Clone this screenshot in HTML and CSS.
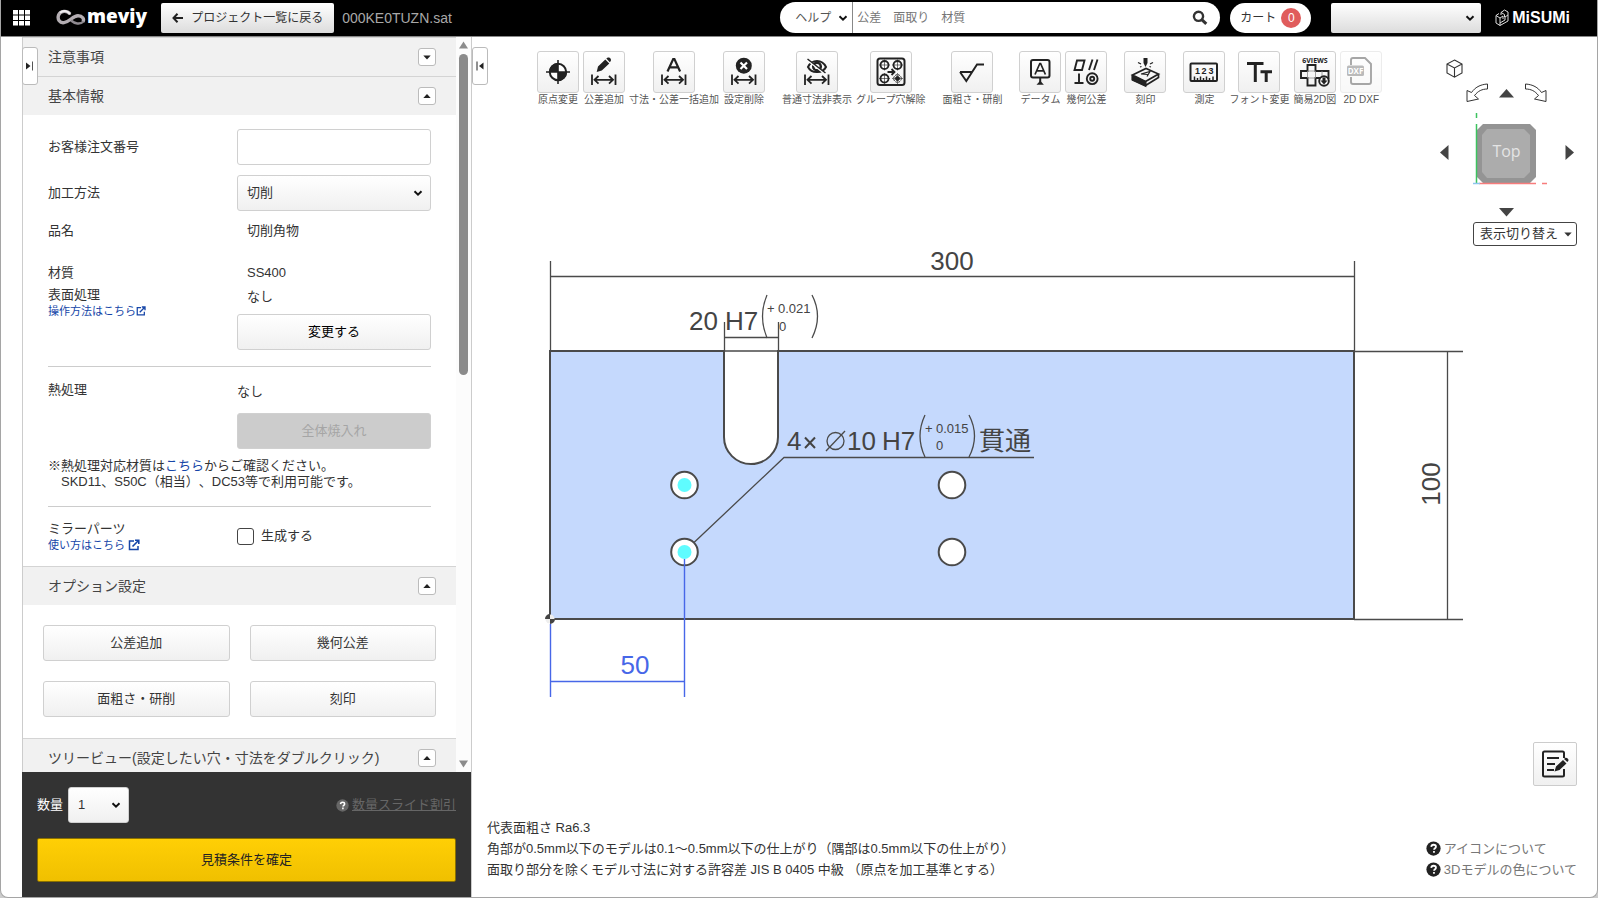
FILE: index.html
```html
<!DOCTYPE html>
<html lang="ja">
<head>
<meta charset="utf-8">
<title>meviy 000KE0TUZN.sat</title>
<link rel="stylesheet" href="styles.css">
</head>
<body>
<svg class="defs" aria-hidden="true">
  <defs>
    <symbol id="chev" viewBox="0 0 10 10"><path d="M1.5 3.2 5 6.6 8.5 3.2" fill="none" stroke="currentColor" stroke-width="2"/></symbol>
    <symbol id="tri-up" viewBox="0 0 8 8"><path d="M.3 6 4 2l3.700 4z" fill="currentColor"/></symbol>
    <symbol id="tri-down" viewBox="0 0 8 8"><path d="M.3 2.500h7.400L4 6.500z" fill="currentColor"/></symbol>
    <symbol id="ext" viewBox="0 0 12 12"><path d="M6 2H1.500v8.500H10V7" fill="none" stroke="currentColor" stroke-width="1.500"/><path d="M4.500 7.500 10.500 1.500M7 1.200h3.800V5" fill="none" stroke="currentColor" stroke-width="1.600"/></symbol>
    <symbol id="q" viewBox="0 0 16 16"><circle cx="8" cy="8" r="7.600" fill="currentColor"/><path d="M5.600 6.300C5.700 4.700 6.700 4 8.100 4s2.500.8 2.500 2.100c0 1.600-1.900 1.700-2 3.200M8.500 10.600v2" class="q-mark" fill="none" stroke-width="1.900"/></symbol>
    <symbol id="dim" viewBox="0 0 42 42"><path d="M9 23.500v10.500M32.500 23.500v10.500M11 28.800h19.500M15.500 25l-4 3.800 4 3.800M26 25l4 3.800-4 3.800" fill="none" stroke="currentColor" stroke-width="1.800"/></symbol>
  </defs>
</svg>
<div class="app">
  <header class="top">
    <button class="apps" aria-label="メニュー"><svg width="17" height="16" viewBox="0 0 17 16"><path fill="#fff" d="M0 0h5v4.500H0zM6 0h5v4.500H6zM12 0h5v4.500h-5zM0 5.500h5V10H0zM6 5.500h5V10H6zM12 5.500h5V10h-5zM0 11h5v4.500H0zM6 11h5v4.500H6zM12 11h5v4.500h-5z"/></svg></button>
    <a class="brand" href="#"><svg width="30" height="18" viewBox="0 0 30 18" fill="none"><path d="M14 4.800C11 1.200 4.500 1.500 2.600 6 1 10.500 4 14.200 8 13.600c6-.7 8.500-6.800 14-6.800 4.500 0 6.500 3.200 5 6" stroke="#b3adb2" stroke-width="3.400"/><path d="M14.500 5.500C11.500 1.500 7 1 4 3.800" stroke="#efedef" stroke-width="2"/><path d="M15 11.500c3.500 3 9 4.500 12.500 1" stroke="#8f8a90" stroke-width="2.400"/></svg><span>meviy</span></a>
    <button class="back"><svg width="12" height="12" viewBox="0 0 12 12"><path d="M11 6H2M5.500 1.800 1.500 6l4 4.200" fill="none" stroke="#222" stroke-width="2"/></svg>プロジェクト一覧に戻る</button>
    <span class="file">000KE0TUZN.sat</span>
    <form class="search">
      <span class="pick help"><select aria-label="検索対象"><option>ヘルプ</option></select><svg width="10" height="10"><use href="#chev"/></svg></span>
      <input type="search" aria-label="検索" placeholder="公差　面取り　材質">
      <button type="button" aria-label="検索する"><svg width="16" height="16" viewBox="0 0 16 16"><circle cx="6.500" cy="6.300" r="4.600" fill="none" stroke="#333" stroke-width="2.400"/><path d="M10 9.800l4.300 4" stroke="#333" stroke-width="3"/></svg></button>
    </form>
    <button class="cart">カート<span class="count">0</span></button>
    <span class="pick account"><select aria-label="アカウント"><option></option></select><svg width="10" height="10"><use href="#chev"/></svg></span>
    <a class="misumi" href="#"><svg width="14" height="18" viewBox="0 0 14 18" fill="none" stroke="#ddd" stroke-width="1"><path d="M1 6.500 5 9v7.500L1 14zM5 9l3-2v3M5 16.500l8-4.500V6l-3 2v3l-5 3M6 6V3.500L9.500 1 13 3v3M6 3.500 9.500 5.500M9.500 5.500V8M1 6.500 4 4.500"/></svg><span>MiSUMi</span></a>
  </header>
  <div class="work">
    <aside class="side">
      <button class="fold" aria-label="パネルを開く"><svg width="8" height="10" viewBox="0 0 8 10"><path d="M0 1.500 4.500 5 0 8.500z" fill="#222"/><path d="M6.500.5v9" stroke="#555"/></svg></button>
      <div class="pane">
        <div class="scroll">
          <section>
            <h2>注意事項<button class="tog" aria-label="開く"><svg width="8" height="8"><use href="#tri-down"/></svg></button></h2>
          </section>
          <section>
            <h2>基本情報<button class="tog" aria-label="閉じる"><svg width="8" height="8"><use href="#tri-up"/></svg></button></h2>
            <div class="form">
              <div class="row order"><label for="order">お客様注文番号</label><input class="box" id="order" type="text"></div>
              <div class="row method"><label for="method">加工方法</label><span class="pick"><select class="box" id="method"><option>切削</option></select><svg width="10" height="10"><use href="#chev"/></svg></span></div>
              <div class="row name"><span>品名</span><span class="val">切削角物</span></div>
              <div class="row material"><span>材質</span><span class="val">SS400</span></div>
              <div class="row surface">
                <div class="stack"><span>表面処理</span><a href="#">操作方法はこちら<svg width="10" height="10"><use href="#ext"/></svg></a></div>
                <div class="stack set"><span class="val">なし</span><button class="box strong">変更する</button></div>
              </div>
              <hr>
              <div class="row heat">
                <span>熱処理</span>
                <div class="stack set"><span>なし</span><button class="box" disabled>全体焼入れ</button></div>
              </div>
              <p class="hint">※熱処理対応材質は<a href="#">こちら</a>からご確認ください。<br>　SKD11、S50C（相当）、DC53等で利用可能です。</p>
              <hr>
              <div class="row mirror">
                <div class="stack"><span>ミラーパーツ</span><a href="#">使い方はこちら<svg width="12" height="12"><use href="#ext"/></svg></a></div>
                <label class="check"><input type="checkbox">生成する</label>
              </div>
            </div>
          </section>
          <section>
            <h2>オプション設定<button class="tog" aria-label="閉じる"><svg width="8" height="8"><use href="#tri-up"/></svg></button></h2>
            <div class="options">
              <button class="box">公差追加</button><button class="box">幾何公差</button>
              <button class="box">面粗さ・研削</button><button class="box">刻印</button>
            </div>
          </section>
          <section>
            <h2>ツリービュー(設定したい穴・寸法をダブルクリック)<button class="tog" aria-label="閉じる"><svg width="8" height="8"><use href="#tri-up"/></svg></button></h2>
          </section>
        </div>
        <div class="bar" aria-hidden="true">
          <svg width="9" height="8" viewBox="0 0 9 8"><path d="M0 7.500 4.500.5 9 7.500z" fill="#8b8b8b"/></svg>
          <span class="thumb"></span>
          <svg width="9" height="8" viewBox="0 0 9 8"><path d="M0 .5 4.500 7.500 9 .5z" fill="#8b8b8b"/></svg>
        </div>
      </div>
      <div class="quote">
        <div class="qty">
          <label for="qty">数量</label>
          <span class="pick"><select class="box" id="qty"><option>1</option></select><svg width="10" height="10"><use href="#chev"/></svg></span>
          <a class="slide" href="#"><svg width="13" height="13"><use href="#q"/></svg><u>数量スライド割引</u></a>
        </div>
        <button class="confirm">見積条件を確定</button>
      </div>
    </aside>
    <main class="view">
      <svg class="drawing" viewBox="472 37 1125 860" role="img" aria-label="平面図">
        <path d="M550 351H724V437a27 27 0 0 0 54 0V351H1354V619H550z" fill="#c5d9fd" stroke="#4a4a4a" stroke-width="2"/>
        <g stroke="#4a4a4a" fill="none" stroke-width="1.300">
          <path d="M550.500 261v90M1354.500 261v90M550 276.500h804M724 351h54"/>
          <path d="M724.500 322v30M778.500 322v30M724 337.500h54"/>
          <path d="M1354 351.500h109M1354 619.500h109M1447.500 351v268"/>
          <path d="M694 542.500 784 457.500h250"/>
          <path d="M767 295q-9 21 0 43M812 295q11 21 0 43M925 415q-10 21 0 42M969 415q11 21 0 42"/>
        </g>
        <g fill="#fff" stroke="#4a4a4a" stroke-width="2">
          <circle cx="684.500" cy="485" r="13.300"/><circle cx="684.500" cy="552" r="13.300"/>
          <circle cx="952" cy="485" r="13.300"/><circle cx="952" cy="552" r="13.300"/>
        </g>
        <circle cx="684.500" cy="485" r="7" fill="#5ffcff"/><circle cx="684.500" cy="552" r="7" fill="#5ffcff"/>
        <circle cx="550" cy="619" r="4.500" fill="#eee"/><path d="M550 619v-5a5 5 0 0 0-5 5zM550 619v5a5 5 0 0 0 5-5z" fill="#444"/>
        <path d="M550.500 624v73M684.500 559v138M550 681.500h134" stroke="#4767e8" stroke-width="1.400" fill="none"/>
        <g class="dims">
          <text x="952" y="270" text-anchor="middle">300</text>
          <text x="689" y="330">20</text><text x="725" y="330">H7</text>
          <text x="787" y="450">4</text><text x="847" y="450">10</text><text x="882" y="450">H7</text>
          <text x="979" y="450">貫通</text>
          <text x="635" y="674" text-anchor="middle" class="sel">50</text>
          <text transform="translate(1440 484) rotate(-90)" text-anchor="middle">100</text>
        </g>
        <path d="M805 437.500l10 10.500M815 437.500l-10 10.500" stroke="#444" stroke-width="2"/>
        <g fill="none" stroke="#4a4a4a" stroke-width="1.300"><circle cx="835.500" cy="441" r="8.500"/><path d="M826 451l19-20"/></g>
        <g class="tol">
          <text x="767" y="313">+</text><text x="778" y="313">0.021</text><text x="779" y="331">0</text>
          <text x="925" y="433">+</text><text x="936" y="433">0.015</text><text x="936" y="450">0</text>
        </g>
      </svg>
      <button class="fold" aria-label="パネルを閉じる"><svg width="8" height="10" viewBox="0 0 8 10"><path d="M7.500 1.500 3 5l4.500 3.500z" fill="#222"/><path d="M1 .5v9" stroke="#222"/></svg></button>
      <div class="upper">
        <nav class="tools">
          <div class="group">
            <button class="tool"><span class="ic"><svg viewBox="1 1 40 40"><circle cx="21" cy="21" r="8.200" fill="#fff" stroke="#222" stroke-width="2"/><path d="M21 21v-9a9 9 0 0 0-9 9zM21 21v9a9 9 0 0 0 9-9z" fill="#222"/><path d="M21 9v24M9 21h24" stroke="#222" stroke-width="1.600"/></svg></span>原点変更</button>
            <button class="tool"><span class="ic"><svg viewBox="1 1 40 40"><use href="#dim" width="42" height="42"/><path d="M13.700 21l1.300-5.500 7.300-7 4 4-7.500 7zM23.300 7.500l1.500-1c2-.5 3.900 1.500 3 3.400l-1 1.400z" fill="#222"/></svg></span>公差追加</button>
            <button class="tool"><span class="ic"><svg viewBox="1 1 40 40"><use href="#dim" width="42" height="42"/><path d="M14.500 20.500 20.200 8h1.200l5.700 12.500M16.500 16.300h8.500" fill="none" stroke="#222" stroke-width="2.200"/></svg></span>寸法・公差一括追加</button>
            <button class="tool"><span class="ic"><svg viewBox="1 1 40 40"><use href="#dim" width="42" height="42"/><circle cx="20.800" cy="14.700" r="8" fill="#222"/><path d="M17.500 11.500l6.500 6.500M24 11.500 17.500 18" stroke="#fff" stroke-width="2.200"/></svg></span>設定削除</button>
          </div>
          <div class="group">
            <button class="tool"><span class="ic"><svg viewBox="1 1 40 40"><use href="#dim" width="42" height="42"/><path d="M12 16c4-8 14-8 18 0-3 6-14 7.500-18 0z" fill="none" stroke="#222" stroke-width="2"/><circle cx="21" cy="15.500" r="3.800" fill="none" stroke="#222" stroke-width="2.500"/><path d="M12 9.500l18 14" stroke="#fff" stroke-width="2"/><path d="M11.500 8l18 14" stroke="#222" stroke-width="1.500"/></svg></span>普通寸法非表示</button>
            <button class="tool"><span class="ic"><svg viewBox="1 1 40 40" fill="none" stroke="#222"><rect x="7.500" y="7.500" width="27" height="26.500" rx="2.500" stroke-width="2"/><g stroke-width="1.800"><circle cx="14.500" cy="14" r="4"/><circle cx="27.500" cy="14" r="4"/><circle cx="14.500" cy="27.500" r="4"/></g><circle cx="27.500" cy="27.500" r="3.800" stroke-dasharray="2 1"/><circle cx="27.500" cy="27.500" r="2" fill="#222"/><path d="M14.500 8.500v11M9 14h11M27.500 8.500v11M22 14h11M14.500 22v11M9 27.500h11M27.500 22v11M22 27.500h11" stroke-width=".6"/><path d="M17.500 21h6M21.500 18l3 3-3 3" stroke-width="1.800"/></svg></span>グループ穴解除</button>
          </div>
          <div class="group">
            <button class="tool"><span class="ic"><svg viewBox="1 1 40 40"><path d="M9 21h12.500M9 21l6.300 9L26 13.500h7" fill="none" stroke="#222" stroke-width="1.900"/></svg></span>面粗さ・研削</button>
          </div>
          <div class="group">
            <button class="tool"><span class="ic"><svg viewBox="1 1 40 40" fill="none" stroke="#222"><rect x="12" y="9" width="18.500" height="17.500" rx="2" stroke-width="2"/><path d="M16 23.500 20.800 12.500h.8l4.800 11M17.800 19.800h7" stroke-width="1.700"/><path d="M21.200 26.500v5" stroke-width="2"/><path d="M17.500 33.800l3.700-4 3.700 4z" fill="#222" stroke="none"/></svg></span>データム</button>
            <button class="tool"><span class="ic"><svg viewBox="1 1 40 40" fill="none" stroke="#222" stroke-width="1.900"><path d="M12 9.500h7.500L17 19H9.500zM24 19l3.500-10.500M29 19l3.500-10.500M14 22.500v9M9.500 32h9"/><circle cx="27.200" cy="27.700" r="5.400"/><circle cx="27.200" cy="27.700" r="2"/></svg></span>幾何公差</button>
          </div>
          <div class="group">
            <button class="tool"><span class="ic"><svg viewBox="1 1 40 40" fill="none" stroke="#222" stroke-width="1.700"><path d="M8.500 24 22 17.500l12.500 5.500L21.500 30.500zM8.500 24v4.500l13 6 13-8V23M21.500 30.500v4" /><path d="M8.500 25l13 6v4l-13-6z" fill="#222"/><path d="M17 23l9-2.500-3 5M17 23l7 .5" stroke-width="1.200"/><path d="M19.500 7h4v5l-2 4-2-4z" fill="#222" stroke="none"/><path d="M14 11.500l3 1.500M29 11.500l-3 1.500M16 16l1.500-.5M27 16l-1.500-.5" stroke-width="1.300"/></svg></span>刻印</button>
          </div>
          <div class="group">
            <button class="tool"><span class="ic"><svg viewBox="1 1 40 40"><rect x="7.500" y="12.500" width="26.500" height="17.500" rx="1" fill="none" stroke="#222" stroke-width="2"/><path d="M11.500 29.500v-4M14.500 29.500v-2.500M17.500 29.500v-4M20.500 29.500v-2.500M23.500 29.500v-4M26.500 29.500v-2.500M30 29.500v-4" stroke="#222" stroke-width="1.500"/><text class="t-num" x="12" y="23">1</text><text class="t-num" x="18.500" y="23">2</text><text class="t-num" x="25.500" y="23">3</text></svg></span>測定</button>
            <button class="tool font"><span class="ic"><svg viewBox="1 1 40 40"><path d="M9 12.500h16.500M17.300 12.500V31M22.500 20.800h11.500M28.200 20.800V31" fill="none" stroke="#222" stroke-width="3"/></svg></span>フォント変更</button>
            <button class="tool"><span class="ic"><svg viewBox="1 1 40 40"><text class="t-views" x="21" y="11.500" text-anchor="middle">6VIEWS</text><path d="M13.500 14h8v6h13v7h-13v7.500h-8V27H7v-7h6.500z" fill="none" stroke="#222" stroke-width="1.900"/><path d="M13.500 20h8v7h-8zM28 20v7" fill="none" stroke="#888" stroke-width=".8"/><circle cx="30" cy="30" r="4.800" fill="#f8f8f8" stroke="#222" stroke-width="1.900"/><path d="M28.500 26.500h3v3h2l-3.500 4-3.500-4h2z" fill="#222"/></svg></span>簡易2D図</button>
            <button class="tool off" disabled><span class="ic"><svg viewBox="1 1 40 40"><path d="M11 14V9c0-1.500.5-2 2-2h12l6 6v18c0 1.500-.5 2-2 2H13c-1.500 0-2-.5-2-2v-5" fill="none" stroke="#222" stroke-width="1.900"/><rect x="7" y="14.500" width="17" height="10.500" rx="1.500" fill="#555"/><text class="t-dxf" x="15.500" y="22.500" text-anchor="middle">DXF</text></svg></span>2D DXF</button>
          </div>
        </nav>
        <div class="orient">
          <button class="home" aria-label="等角図"><svg width="17" height="19" viewBox="0 0 17 19"><path d="M8.500 1 16 5v9l-7.500 4.200L1 14V5zM1 5l7.500 4L16 5M8.500 9v9" fill="none" stroke="#333" stroke-width="1.100"/></svg></button>
          <div class="turn">
            <button aria-label="左回転"><svg width="22" height="20" viewBox="0 0 22 20"><path d="M21.500 1C14 1.500 9 4.500 5.500 9.500L1 7.500V18.500L12.500 16 8.500 12.500C12 8 16 6 21.500 6z" fill="none" stroke="#333"/></svg></button>
            <button aria-label="上へ"><svg width="15" height="9" viewBox="0 0 15 9"><path d="M0 8.500 7.500 0 15 8.500z" fill="#444"/></svg></button>
            <button aria-label="右回転"><svg width="22" height="20" viewBox="0 0 22 20"><path d="M.5 1C8 1.500 13 4.500 16.500 9.500L21 7.500V18.500L9.500 16 13.500 12.500C10 8 6 6 .5 6z" fill="none" stroke="#333"/></svg></button>
          </div>
          <div class="mid">
            <button aria-label="左へ"><svg width="9" height="15" viewBox="0 0 9 15"><path d="M8.500 0 0 7.500 8.500 15z" fill="#444"/></svg></button>
            <svg class="cube" width="84" height="82" viewBox="1466 110 84 82"><path d="M1484 125h47l6 6v47l-6 6h-47l-6-6v-47z" fill="#949494"/><path d="M1488 130h37l6 6v37l-6 6h-37l-5-6v-37z" fill="#acacac"/><path d="M1477.500 114v5M1477.500 125v59" stroke="#3cc35f" stroke-width="1.500"/><path d="M1480 184.500h57M1543 184.500h5" stroke="#f77c7c" stroke-width="1.500"/><path d="M1474 184.500h7" stroke="#8ec5ee" stroke-width="1.500"/><text x="1507.500" y="158" text-anchor="middle">Top</text></svg>
            <button aria-label="右へ"><svg width="9" height="15" viewBox="0 0 9 15"><path d="M.5 0 9 7.500.5 15z" fill="#444"/></svg></button>
          </div>
          <div class="turn low"><button aria-label="下へ"><svg width="15" height="9" viewBox="0 0 15 9"><path d="M0 0 7.500 8.500 15 0z" fill="#444"/></svg></button></div>
          <button class="display">表示切り替え<svg width="8" height="8"><use href="#tri-down"/></svg></button>
        </div>
      </div>
      <div class="lower">
        <p class="notes">代表面粗さ Ra6.3<br>角部が0.5mm以下のモデルは0.1〜0.5mm以下の仕上がり（隅部は0.5mm以下の仕上がり）<br>面取り部分を除くモデル寸法に対する許容差 JIS B 0405 中級 （原点を加工基準とする）</p>
        <div class="corner">
          <button class="memo" aria-label="メモ"><svg width="28" height="28" viewBox="0 0 28 28"><path d="M23 8V3c0-1-.5-1.500-1.500-1.500h-18C2.500 1.500 2 2 2 3v22c0 1 .5 1.500 1.500 1.500h18c1 0 1.500-.5 1.500-1.500v-6" fill="none" stroke="#222" stroke-width="2"/><path d="M6 8h12M6 14h8M6 20h7" stroke="#222" stroke-width="2"/><path d="M13.500 21.500l1.500-5 7-6.500 3.500 3.500-7 6.500zM23 9l1-1c1.500-1.300 4.500 1.300 3.200 3l-.9 1z" fill="#222"/></svg></button>
          <a href="#"><svg width="15" height="15"><use href="#q"/></svg>アイコンについて</a>
          <a href="#"><svg width="15" height="15"><use href="#q"/></svg>3Dモデルの色について</a>
        </div>
      </div>
    </main>
  </div>
</div>
</body>
</html>
```
FILE: styles.css
```css
* { box-sizing: border-box; }
html, body { height: 100%; margin: 0; }
body {
  background: #ccc;
  color: #333;
  font: 13px/18px "Liberation Sans", "Noto Sans CJK JP", sans-serif;
  text-spacing-trim: space-all;
}
button, input, select { font: inherit; color: inherit; margin: 0; }
button { padding: 0; border: 0; background: none; cursor: pointer; }
a { color: #1646a8; text-decoration: none; }
svg { display: block; flex: none; }
h2, p { margin: 0; }
.defs { display: none; }

.app {
  height: 100vh;
  display: flex;
  flex-direction: column;
  background: #fff;
  border: 1px solid #a5a5a5;
  border-top: 0;
  border-radius: 0 0 8px 8px;
  overflow: hidden;
}

/* header */
.top {
  height: 37px;
  flex: none;
  display: flex;
  align-items: center;
  background: #000;
  border-bottom: 1px solid #888;
  padding: 0 27px 1px 12px;
  color: #333;
}
.brand {
  display: flex;
  align-items: center;
  gap: 1px;
  margin: 0 14px 0 26px;
  color: #fff;
  font: 800 19px/24px "Open Sans", sans-serif;
}
.brand span { padding-bottom: 4px; }
.back {
  height: 30px;
  padding: 0 11px;
  display: flex;
  align-items: center;
  gap: 7px;
  border-radius: 2px;
  background: linear-gradient(#fff, #dcdcdc);
  font-size: 12px;
}
.file { margin-left: 8px; font-size: 14px; color: #a8a8a8; }
.search {
  margin-left: auto;
  width: 440px;
  height: 31px;
  display: flex;
  align-items: center;
  background: #fff;
  border-radius: 16px;
  overflow: hidden;
}
.pick { position: relative; display: flex; align-items: center; }
.pick select { appearance: none; width: 100%; cursor: pointer; }
.pick svg { position: absolute; right: 8px; color: #111; pointer-events: none; }
.help { width: 73px; height: 100%; border-right: 1px solid #888; }
.help select { border: 0; background: none; height: 100%; padding-left: 15px; color: #555; font-size: 12px; }
.help svg { right: 4px; }
.search input {
  flex: 1;
  min-width: 0;
  border: 0;
  outline: 0;
  background: none;
  padding: 0 4px;
  font-size: 12px;
}
.search input::placeholder { color: #757575; }
.search button { margin-right: 12px; }
.cart {
  height: 30px;
  margin: 0 20px 0 10px;
  padding: 0 10px;
  display: flex;
  align-items: center;
  gap: 5px;
  background: #fff;
  border-radius: 15px;
  font-size: 12px;
}
.count {
  width: 20px;
  height: 20px;
  border-radius: 50%;
  background: #e05c5c;
  color: #fff;
  line-height: 20px;
}
.account { width: 150px; height: 30px; }
.account select { height: 100%; border: 0; border-radius: 2px; background: linear-gradient(#fff, #dcdcdc); }
.account svg { right: 6px; }
.misumi {
  display: flex;
  align-items: center;
  gap: 3px;
  margin-left: 14px;
  color: #fff;
  font: bold 16px/22px "Liberation Sans", sans-serif;
}

/* side panel */
.work { flex: 1; min-height: 0; display: flex; }
.side {
  position: relative;
  width: 450px;
  flex: none;
  margin-left: 21px;
  display: flex;
  flex-direction: column;
  border-right: 1px solid #ccc;
}
.fold {
  position: absolute;
  z-index: 2;
  left: 0;
  top: 10px;
  width: 16px;
  height: 38px;
  display: flex;
  align-items: center;
  justify-content: center;
  border: 1px solid #bbb;
  border-radius: 3px;
  background: #fff;
}
.pane { flex: 1; min-height: 0; display: flex; border-left: 1px solid #ccc; }
.scroll { flex: 1; min-width: 0; overflow: hidden; }
.bar {
  width: 15px;
  flex: none;
  display: flex;
  flex-direction: column;
  align-items: center;
  justify-content: space-between;
  background: #fcfcfc;
  padding: 4px 0;
}
.thumb { width: 9px; height: 321px; border-radius: 5px; background: #8b8b8b; margin: 5px 0 auto; }
h2 {
  height: 39px;
  display: flex;
  align-items: center;
  justify-content: space-between;
  padding: 0 20px 1px 25px;
  background: #f1f1f1;
  border-top: 1px solid #d4d4d4;
  font-size: 14px;
  font-weight: normal;
  color: #444;
}
.tog {
  width: 18px;
  height: 18px;
  display: flex;
  align-items: center;
  justify-content: center;
  border: 1px solid #bbb;
  border-radius: 3px;
  background: #fff;
  color: #222;
}
.form { padding: 14px 25px; }
.row { display: grid; grid-template-columns: 189px 1fr; align-items: center; }
.row.method { margin-top: 10px; }
.row.name { margin-top: 11px; }
.row.material { margin-top: 24px; }
.row.surface { margin-top: 4px; align-items: start; }
.row.heat { margin-top: 14px; align-items: start; }
.row.mirror { margin-top: 13px; }
.val { padding-left: 10px; }
.box {
  width: 100%;
  height: 36px;
  padding: 0 9px;
  border: 1px solid #d0d0d0;
  border-radius: 3px;
  background: linear-gradient(#fff, #f0f0f0);
}
input.box { background: #fff; }
.strong { color: #000; }
.box:disabled { background: #ccc; color: #a5a5a5; }
.stack { display: flex; flex-direction: column; }
.stack a { display: flex; align-items: center; gap: 3px; font-size: 11px; line-height: 14px; }
.surface a { gap: 0; }
.set { gap: 8px; padding-top: 2px; }
.heat .set { gap: 12px; }
hr { border: 0; border-top: 1px solid #ccc; margin: 16px 0 0; }
.hint { margin-top: 9px; line-height: 16px; white-space: nowrap; }
.check { display: flex; align-items: center; gap: 7px; }
.check input {
  appearance: none;
  width: 17px;
  height: 17px;
  border: 1px solid #444;
  border-radius: 3px;
  background: #fff;
}
.options { display: grid; grid-template-columns: 1fr 1fr; gap: 20px; padding: 20px 20px 21px; }
.quote { background: #333; padding: 15px; color: #fff; }
.qty { display: flex; align-items: center; gap: 5px; margin-bottom: 15px; }
.qty .pick { width: 61px; color: #333; }
.slide { margin-left: auto; display: flex; align-items: center; gap: 3px; color: #666; }
.slide .q-mark { stroke: #333; }
.confirm {
  width: 100%;
  height: 44px;
  border: 1px solid #8a7000;
  border-radius: 2px;
  background: linear-gradient(#ffcf05, #f0c000);
  color: #222;
}

/* viewer */
.view {
  position: relative;
  flex: 1;
  min-width: 0;
  display: flex;
  flex-direction: column;
  justify-content: space-between;
}
.drawing { position: absolute; left: 0; top: 0; width: 100%; height: 100%; }
.dims { font-size: 26px; fill: #444; }
.dims .sel { fill: #4767e8; }
.tol { font-size: 13px; fill: #444; }
.upper, .lower { position: relative; display: flex; justify-content: space-between; }
.upper { padding: 14px 20px 0 65px; }
.tools, .group { display: flex; align-items: flex-start; }
.tools { gap: 17px; }
.group { gap: 4px; }
.tool {
  min-width: 42px;
  display: flex;
  flex-direction: column;
  align-items: center;
  font-size: 10px;
  line-height: 14px;
  color: #555;
  white-space: nowrap;
}
.ic {
  width: 42px;
  height: 42px;
  border: 1px solid #d0d0d0;
  border-radius: 3px;
  background: linear-gradient(#fff, #f0f0f0);
  color: #222;
}
.off .ic { opacity: .4; }
.t-num { font: bold 9px "Liberation Sans", sans-serif; fill: #222; }
.t-views { font: bold 7px "Open Sans", sans-serif; fill: #222; }
.t-dxf { font: bold 8px "Open Sans", sans-serif; fill: #fff; }
.orient { width: 137px; padding-top: 8px; display: flex; flex-direction: column; }
.home { align-self: flex-start; margin-left: 6px; }
.turn { display: flex; justify-content: center; align-items: center; gap: 11px; margin-top: 5px; padding-right: 4px; }
.mid { display: flex; justify-content: space-between; align-items: center; margin-top: 6px; padding-right: 3px; }
.mid button { margin-top: 4px; }
.cube text { font: 16px "Open Sans", sans-serif; fill: #e4e4e4; }
.low { margin-top: 17px; }
.display {
  align-self: flex-end;
  height: 24px;
  margin-top: 5px;
  padding: 0 4px 0 6px;
  display: flex;
  align-items: center;
  gap: 6px;
  border: 1px solid #444;
  border-radius: 3px;
  background: #fff;
}
.lower { align-items: flex-end; padding: 0 20px 17px 15px; }
.notes, .corner { line-height: 21px; }
.corner { display: flex; flex-direction: column; }
.corner a { display: flex; align-items: center; gap: 3px; color: #777; }
.corner a svg { color: #222; }
.q-mark { stroke: #fff; }
.memo {
  align-self: flex-end;
  width: 44px;
  height: 44px;
  margin-bottom: 52px;
  display: flex;
  align-items: center;
  justify-content: center;
  border: 1px solid #ccc;
  border-radius: 2px;
  background: linear-gradient(#fff, #f0f0f0);
}
```
